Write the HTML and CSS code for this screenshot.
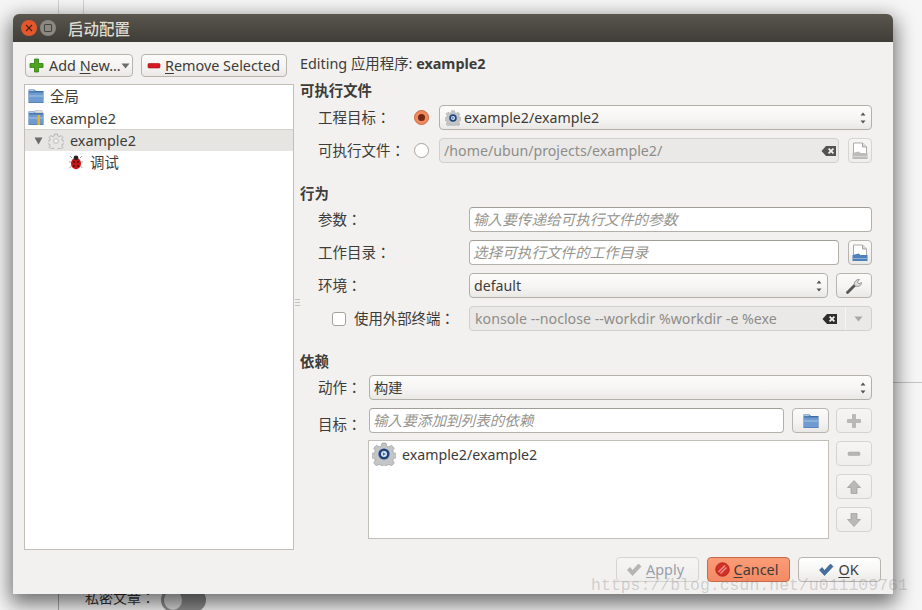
FILE: index.html
```html
<!DOCTYPE html>
<html>
<head>
<meta charset="utf-8">
<title>启动配置</title>
<link rel="stylesheet" href="styles.css">
</head>
<body>
<svg class="defs" width="0" height="0">
  <defs>
    <symbol id="folder" viewBox="0 0 16 16"><path d="M0.500 1.500h6l1.500 1.500h7.500v12h-15z" fill="#3f6fa8"/><path d="M1 4.500h14v10H1z" fill="#6f9bd0"/><path d="M1 7.500h14v1H1z" fill="#a9c6e6"/><path d="M1 2h5.500v1.200H1z" fill="#a9c6e6"/></symbol>
    <symbol id="gearblue" viewBox="0 0 24 24"><path d="M10 1h4l.7 3 2.200.9 2.600-1.600 2.800 2.800-1.600 2.600.9 2.200 3 .7v4l-3 .7-.9 2.200 1.600 2.600-2.800 2.800-2.600-1.600-2.200.9-.7 3h-4l-.7-3-2.200-.9-2.600 1.600-2.800-2.800 1.600-2.600-.9-2.200-3-.7v-4l3-.7.9-2.200-1.600-2.600 2.800-2.800 2.600 1.600 2.200-.9z" fill="#c3c5c7" stroke="#8d8f92" stroke-width=".6"/><circle cx="12" cy="12" r="5.600" fill="#21467f"/><circle cx="12" cy="12" r="3" fill="#dfe7f2"/><path d="M10.900 10.200l2.900 1.800-2.900 1.800z" fill="#3a6cb0"/></symbol>
    <symbol id="clear" viewBox="0 0 16 12"><path d="M5 1h10v10H5L0.500 6z" fill="currentColor"/><path d="M7.600 3.600l4.800 4.800M12.400 3.600L7.600 8.400" stroke="#f0efed" stroke-width="1.800"/></symbol>
    <symbol id="spin" viewBox="0 0 8 14"><path d="M4 1.500l2.500 3h-5z" fill="#555"/><path d="M4 12.500l2.500-3h-5z" fill="#555"/></symbol>
    <symbol id="docopen" viewBox="0 0 16 18"><path d="M1.500 1h9l4 4v7h-13z" fill="#fff" stroke="#8a8a8a" stroke-width=".7"/><path d="M10.500 1v4h4" fill="#d8d8d8" stroke="#8a8a8a" stroke-width=".7"/><path d="M0.500 11l6-1.500 2 1.500h7v6h-15z" fill="currentColor"/><path d="M1 14h14v.9H1z" fill="#fff" fill-opacity=".4"/></symbol>
  </defs>
</svg>

<div class="bg-line bg-line-a"></div>
<div class="bg-line bg-line-b"></div>
<div class="bg-line bg-line-c"></div>
<div class="bg-line bg-line-d"></div>
<div class="bg-label">私密文章：</div>
<div class="bg-toggle"><span class="bg-knob"></span></div>

<div class="window">
  <header class="titlebar">
    <span class="wbtn wbtn-close">
      <svg width="8" height="8" viewBox="0 0 8 8"><path d="M1 1l6 6M7 1L1 7" stroke="#4a2010" stroke-width="1.100"/></svg>
    </span>
    <span class="wbtn wbtn-max"><span class="wbtn-box"></span></span>
    <span class="wtitle">启动配置</span>
  </header>

  <div class="body">
    <div class="main">
      <aside class="left">
        <div class="toolbar">
          <button class="btn btn-add">
            <svg class="ic" width="15" height="15" viewBox="0 0 15 15"><path d="M5.500 1h4v4.500H14v4H9.500V14h-4V9.500H1v-4h4.500z" fill="#4fa31f" stroke="#2f7d10" stroke-width=".8"/></svg>
            <span>Add <u>N</u>ew...</span>
            <svg class="drop" width="9" height="6" viewBox="0 0 9 6"><path d="M0.500 0.500h8L4.500 5.500z" fill="#6d6d6d"/></svg>
          </button>
          <button class="btn btn-remove">
            <svg class="ic" width="14" height="8" viewBox="0 0 14 8"><rect x="1" y="1.500" width="12" height="4.500" rx="1" fill="#d81820" stroke="#a50f14" stroke-width=".6"/></svg>
            <span><u>R</u>emove Selected</span>
          </button>
        </div>
        <div class="tree">
          <div class="node node-l0">
            <svg class="nic" width="16" height="16"><use href="#folder"/></svg><span class="cjk">全局</span>
          </div>
          <div class="node node-l0">
            <svg class="nic" width="16" height="16" viewBox="0 0 16 16"><use href="#folder"/><path d="M9.500 5h2.500v10H9.500z" fill="#eab21c"/><path d="M7 0.500h7l1 2.500H7z" fill="#ddd" stroke="#999" stroke-width=".4"/></svg>example2
          </div>
          <div class="node node-sel">
            <svg class="twist" width="9" height="8" viewBox="0 0 9 8"><path d="M0.500 0.500h8L4.500 7.500z" fill="#6a6a6a"/></svg>
            <svg class="nic" width="16" height="16" viewBox="0 0 24 24"><path d="M10 1.500h4l.7 3 2.200.9 2.600-1.600 2.800 2.800-1.600 2.600.9 2.200 3 .7v4l-3 .7-.9 2.200 1.600 2.600-2.800 2.800-2.600-1.600-2.200.9-.7 3h-4l-.7-3-2.200-.9-2.600 1.600-2.800-2.800 1.600-2.600-.9-2.200-3-.7v-4l3-.7.9-2.200-1.600-2.600 2.800-2.800 2.600 1.600 2.200-.9z" fill="#e6e5e3" stroke="#9c9c9a" stroke-width="1"/><circle cx="12" cy="12" r="3.500" fill="#f2f2f1" stroke="#a5a5a3"/></svg>example2
          </div>
          <div class="node node-l2">
            <svg class="nic" width="14" height="16" viewBox="0 0 14 16"><path d="M3 4L1 2M11 4l2-2M2 8H0M12 8h2M2.500 12l-2 2M11.500 12l2 2" stroke="#8a8a8a" stroke-width=".8"/><ellipse cx="7" cy="9.500" rx="5" ry="5.800" fill="#c81414"/><circle cx="7" cy="3.800" r="2.400" fill="#222"/><circle cx="5" cy="8" r="1" fill="#401010"/><circle cx="9" cy="8" r="1" fill="#401010"/><circle cx="5" cy="12" r="1" fill="#401010"/><circle cx="9" cy="12" r="1" fill="#401010"/></svg><span class="cjk">调试</span>
          </div>
        </div>
      </aside>

      <div class="splitter"><span class="grip"></span></div>

      <section class="right">
        <div class="editing">Editing 应用程序: <b>example2</b></div>

        <h3 class="heading h-exec">可执行文件</h3>
        <div class="row">
          <label class="lab lab-a">工程目标：</label>
          <span class="radio radio-on"><span class="radio-dot"></span></span>
          <div class="combo grow">
            <svg class="combo-ic" width="16" height="16"><use href="#gearblue"/></svg>
            <span class="ctext">example2/example2</span>
            <svg class="spin" width="8" height="14"><use href="#spin"/></svg>
          </div>
        </div>
        <div class="row">
          <label class="lab lab-a">可执行文件：</label>
          <span class="radio"></span>
          <div class="input input-dis grow">
            <span class="ctext">/home/ubun/projects/example2/</span>
            <svg class="clr clr-light" width="16" height="12"><use href="#clear"/></svg>
          </div>
          <button class="btn btn-icon btn-dis btn-doc"><svg class="doc-dis" width="16" height="18"><use href="#docopen"/></svg></button>
        </div>

        <h3 class="heading h-act">行为</h3>
        <div class="row">
          <label class="lab lab-b">参数：</label>
          <div class="input grow"><span class="ph">输入要传递给可执行文件的参数</span></div>
        </div>
        <div class="row">
          <label class="lab lab-b">工作目录：</label>
          <div class="input grow"><span class="ph">选择可执行文件的工作目录</span></div>
          <button class="btn btn-icon btn-doc"><svg class="doc-on" width="16" height="18"><use href="#docopen"/></svg></button>
        </div>
        <div class="row">
          <label class="lab lab-b">环境：</label>
          <div class="combo grow">
            <span class="ctext">default</span>
            <svg class="spin" width="8" height="14"><use href="#spin"/></svg>
          </div>
          <button class="btn btn-icon btn-wrench">
            <svg width="18" height="18" viewBox="0 0 18 18"><path d="M2.500 15.500l7-7" stroke="#555" stroke-width="2.800" stroke-linecap="round"/><path d="M9.500 8.500C8.500 5.500 11 2 14.500 2.500l-2 2.500 1.500 2 2.500-1.500C16.500 9 13 10.500 9.500 8.500z" fill="#dcdcda" stroke="#777" stroke-width=".7"/></svg>
          </button>
        </div>
        <div class="row">
          <label class="check-wrap"><span class="check"></span><span class="cjk">使用外部终端：</span></label>
          <div class="input input-dis input-joined grow">
            <span class="ctext">konsole --noclose --workdir %workdir -e %exe</span>
            <svg class="clr" width="16" height="12"><use href="#clear"/></svg>
            <span class="joined-drop"><svg width="9" height="6" viewBox="0 0 9 6"><path d="M0.500 0.500h8L4.500 5.500z" fill="#a8a8a6"/></svg></span>
          </div>
        </div>

        <h3 class="heading h-dep">依赖</h3>
        <div class="row">
          <label class="lab lab-c">动作：</label>
          <div class="combo grow">
            <span class="ctext cjk">构建</span>
            <svg class="spin" width="8" height="14"><use href="#spin"/></svg>
          </div>
        </div>
        <div class="row">
          <label class="lab lab-c lab-low">目标：</label>
          <div class="input grow"><span class="ph">输入要添加到列表的依赖</span></div>
          <button class="btn btn-icon btn-folder"><svg width="16" height="16"><use href="#folder"/></svg></button>
          <button class="btn btn-icon btn-dis btn-side">
            <svg width="16" height="16" viewBox="0 0 16 16"><path d="M6.500 1.500h3v5h5v3h-5v5h-3v-5h-5v-3h5z" fill="#b9b9b7" stroke="#a5a5a3" stroke-width=".6"/></svg>
          </button>
        </div>
        <div class="deps">
          <div class="list">
            <div class="list-item"><svg width="24" height="24"><use href="#gearblue"/></svg><span>example2/example2</span></div>
          </div>
          <div class="side-btns">
            <button class="btn btn-icon btn-dis btn-side"><svg width="14" height="6" viewBox="0 0 14 6"><rect x="1" y="1" width="12" height="3.500" rx="1" fill="#b5b5b3" stroke="#a5a5a3" stroke-width=".5"/></svg></button>
            <button class="btn btn-icon btn-dis btn-side"><svg width="16" height="16" viewBox="0 0 16 16"><path d="M8 1.500l6.500 7h-3.500v6H5v-6H1.500z" fill="#b9b9b7" stroke="#9b9b99" stroke-width=".7"/></svg></button>
            <button class="btn btn-icon btn-dis btn-side"><svg width="16" height="16" viewBox="0 0 16 16"><path d="M8 14.500l6.500-7h-3.500v-6H5v6H1.500z" fill="#b9b9b7" stroke="#9b9b99" stroke-width=".7"/></svg></button>
          </div>
        </div>
      </section>
    </div>

    <footer class="actions">
      <button class="btn btn-act btn-apply">
        <svg width="16" height="14" viewBox="0 0 16 14"><path d="M1.500 7l2.500-2.500 2.500 3L12.500 1 15 3.500 6.500 12.500z" fill="#b5b5b3" stroke="#a5a5a3" stroke-width=".6"/></svg>
        <span><u>A</u>pply</span>
      </button>
      <button class="btn btn-act btn-cancel">
        <svg width="15" height="15" viewBox="0 0 15 15"><circle cx="7.500" cy="7.500" r="6.800" fill="#d22f25" stroke="#a81c16" stroke-width=".7"/><path d="M3.500 10L10 3.500M5.500 11.500L11.500 5.500" stroke="#f29a8c" stroke-width="1.300"/></svg>
        <span><u>C</u>ancel</span>
      </button>
      <button class="btn btn-act btn-ok">
        <svg width="16" height="14" viewBox="0 0 16 14"><path d="M1.500 7l2.500-2.500 2.500 3L12.500 1 15 3.500 6.500 12.500z" fill="#45709f" stroke="#2e5380" stroke-width=".6"/></svg>
        <span><u>O</u>K</span>
      </button>
    </footer>
  </div>
</div>

<div class="watermark">https://blog.csdn.net/u011109761</div>
</body>
</html>
```

FILE: styles.css
```css
* { box-sizing: border-box; }
html, body { margin: 0; height: 100%; }
body {
  width: 922px;
  height: 610px;
  position: relative;
  overflow: hidden;
  background: #f6f6f6;
  font-family: "Noto Sans", "Noto Sans CJK JP", sans-serif;
  font-size: 14.4px;
  color: #3d3c38;
}
.defs { position: absolute; }

/* desktop behind the window */
.bg-line { position: absolute; background: #d4d4d4; }
.bg-line-a { left: 58px; top: 0; width: 1px; height: 20px; }
.bg-line-b { left: 83px; top: 0; width: 1px; height: 20px; }
.bg-line-c { left: 58px; top: 590px; width: 1px; height: 20px; background: #a8a8a8; }
.bg-line-d { left: 880px; top: 382px; width: 42px; height: 1px; background: #c4c4c4; }
.bg-label { position: absolute; left: 85px; top: 587px; font-size: 14px; color: #333; }
.bg-toggle { position: absolute; left: 161px; top: 588px; width: 45px; height: 24px; border-radius: 12px; background: #8e8e8e; }
.bg-knob { position: absolute; left: 3px; top: 2px; width: 18px; height: 20px; border-radius: 50%; background: #d8d8d8; }

/* window */
.window {
  position: absolute;
  left: 13px;
  top: 14px;
  width: 880px;
  height: 580px;
  display: flex;
  flex-direction: column;
  background: #f2f1f0;
  border-radius: 6px 6px 0 0;
  box-shadow: 0 7px 20px 3px rgba(0, 0, 0, .55);
}
.titlebar {
  height: 28px;
  flex: none;
  display: flex;
  align-items: center;
  padding-left: 8px;
  border-radius: 6px 6px 0 0;
  background: linear-gradient(#5a564e, #3f3d38);
}
.wbtn {
  width: 16px;
  height: 16px;
  border-radius: 50%;
  display: flex;
  align-items: center;
  justify-content: center;
  margin-right: 3px;
}
.wbtn-close { background: #e4572c; }
.wbtn-max { background: #8b8882; }
.wbtn-box { width: 8px; height: 8px; border: 1px solid #45433e; border-radius: 1px; }
.wtitle { margin-left: 9px; font-size: 15.5px; font-weight: 500; color: #dfdbd2; }

.body { flex: 1; display: flex; flex-direction: column; padding: 12px 12px 12px 11px; min-height: 0; }
.main { height: 496px; display: flex; }

/* glyphs of the CJK font sit a pixel low in a centred row */
.cjk { margin-bottom: 2px; }

/* buttons */
.btn {
  font: inherit;
  color: inherit;
  height: 23px;
  padding: 0;
  display: flex;
  align-items: center;
  border: 1px solid #b8b5ae;
  border-radius: 4px;
  background: linear-gradient(#fbfbfa, #f5f4f3 55%, #e9e8e5);
}
.btn u { text-underline-offset: 2px; text-decoration-thickness: 1px; }
.btn-icon { justify-content: center; }
.btn-dis { border-color: #d6d4cf; background: linear-gradient(#f6f5f4, #efeeec); }

/* left panel */
.left { width: 270px; flex: none; display: flex; flex-direction: column; }
.toolbar { height: 30px; display: flex; gap: 8px; padding-left: 1px; }
.btn-add { width: 108px; padding-left: 3px; }
.btn-add .ic { margin-right: 5px; }
.btn-add .drop { margin-left: 0; }
.btn-remove { width: 146px; padding-left: 5px; }
.btn-remove .ic { margin-right: 4px; }
.tree {
  flex: 1;
  background: #fff;
  border: 1px solid #c2bfb8;
  padding-top: 0;
}
.node { height: 22px; display: flex; align-items: center; }
.nic { flex: none; margin-right: 6px; }
.node-l0 { padding-left: 3px; }
.node-sel {
  padding-left: 9px;
  background: #e6e5e2;
  border-top: 1px solid #d3d1cc;
}
.node-sel .nic { margin-left: 5px; margin-right: 6px; }
.twist { flex: none; }
.node-l2 { padding-left: 44px; }
.node-l2 .nic { margin-right: 7px; }

.splitter { width: 6px; flex: none; display: flex; align-items: center; justify-content: center; }
.grip { width: 5px; height: 8px; background: repeating-linear-gradient(#c4c2bc 0 1px, transparent 1px 3px); margin-top: 2px; }

/* right panel */
.right { width: 572px; flex: none; display: flex; flex-direction: column; }
.editing { height: 20px; line-height: 20px; }
.editing b { font-weight: 700; }
.heading { margin: 0; font-size: 14.4px; font-weight: 700; line-height: 20px; }
.h-exec { margin-top: 7px; margin-bottom: 4px; }
.h-act { margin-top: 13px; margin-bottom: 3px; }
.h-dep { margin-top: 13px; margin-bottom: 3px; }

.row { height: 25px; margin-bottom: 8px; display: flex; align-items: center; gap: 8px; }
.row .grow { flex: 1; min-width: 0; }
.lab { flex: none; padding: 0 0 2px 18px; margin-right: -8px; white-space: nowrap; font-size: 14.5px; }
.lab-a { width: 114px; }
.lab-b { width: 169px; }
.lab-c { width: 69px; }
.lab-low { padding-top: 8px; }
.radio {
  flex: none;
  width: 15px;
  height: 15px;
  margin-right: 2px;
  border-radius: 50%;
  border: 1px solid #a5a29c;
  background: #fff;
  display: flex;
  align-items: center;
  justify-content: center;
}
.radio-on { background: #f28a5e; border-color: #c76a44; }
.radio-dot { width: 7px; height: 7px; border-radius: 50%; background: #6e2a12; }

.combo, .input {
  height: 25px;
  display: flex;
  align-items: center;
  border-radius: 4px;
  padding-left: 4px;
  white-space: nowrap;
}
.combo {
  border: 1px solid #b3b0a9;
  background: linear-gradient(#fcfcfb, #f6f5f4 55%, #e9e8e5);
}
.input { border: 1px solid #b3b0a9; border-top-color: #a19e97; background: #fff; }
.input-dis { border-color: #d2d0ca; background: #eae9e7; color: #8e8d8a; }
.ctext { flex: 1; min-width: 0; font-size: 14.2px; }
.combo-ic { flex: none; margin-right: 3px; margin-left: 1px; }
.spin { flex: none; margin-right: 4px; }
.clr { flex: none; color: #2e2e2c; margin-right: 7px; }
.clr-light { color: #55534f; margin-right: 1px; }
.ph { font-size: 14.6px; font-style: italic; color: #96958f; margin: 0 0 2px -1px; }
.btn-doc { width: 24px; height: 25px; margin-left: 1px; }
.doc-dis { color: #bdbcb9; }
.doc-on { color: #4f82bd; }
.btn-wrench { width: 36px; height: 25px; }
.check-wrap {
  flex: none;
  width: 161px;
  margin-right: 0;
  padding-left: 32px;
  display: flex;
  align-items: center;
  white-space: nowrap;
}
.check {
  width: 14px;
  height: 14px;
  margin-right: 8px;
  border: 1px solid #a5a29c;
  border-radius: 3px;
  background: #fff;
  flex: none;
}
.input-joined { padding: 0 0 0 5px; }
.joined-drop {
  width: 26px;
  height: 23px;
  flex: none;
  border-left: 1px solid #f6f5f4;
  display: flex;
  align-items: center;
  justify-content: center;
}
.input-joined .ctext { color: #8e8d8a; }

.btn-folder { width: 37px; height: 25px; margin-right: -1px; }
.btn-side { width: 36px; height: 25px; flex: none; }
.deps { display: flex; gap: 7px; margin-top: -1px; }
.list {
  margin-left: 68px;
  width: 461px;
  height: 99px;
  background: #fff;
  border: 1px solid #c2bfb8;
  padding: 1px 3px;
}
.list-item { display: flex; align-items: center; gap: 6px; font-size: 14.2px; }
.side-btns { display: flex; flex-direction: column; gap: 8px; padding-top: 1px; }

/* footer */
.actions { margin-top: 7px; display: flex; justify-content: flex-end; gap: 8px; }
.btn-act { width: 83px; height: 25px; justify-content: center; gap: 4px; }
.btn-apply { color: #97a0aa; border-color: #d6d4cf; background: linear-gradient(#f6f5f4, #efeeec); padding-right: 5px; }
.btn-cancel { border-color: #c8694a; background: linear-gradient(#fb9c78, #f48a63); padding-right: 4px; }
.btn-ok { background: linear-gradient(#ffffff, #f7f6f5 55%, #ebeae7); padding-right: 2px; }

.watermark {
  position: absolute;
  left: 591px;
  top: 576px;
  font-family: "Liberation Mono", monospace;
  font-size: 16.5px;
  line-height: 20px;
  color: rgba(130, 130, 130, .32);
  white-space: nowrap;
}
```
